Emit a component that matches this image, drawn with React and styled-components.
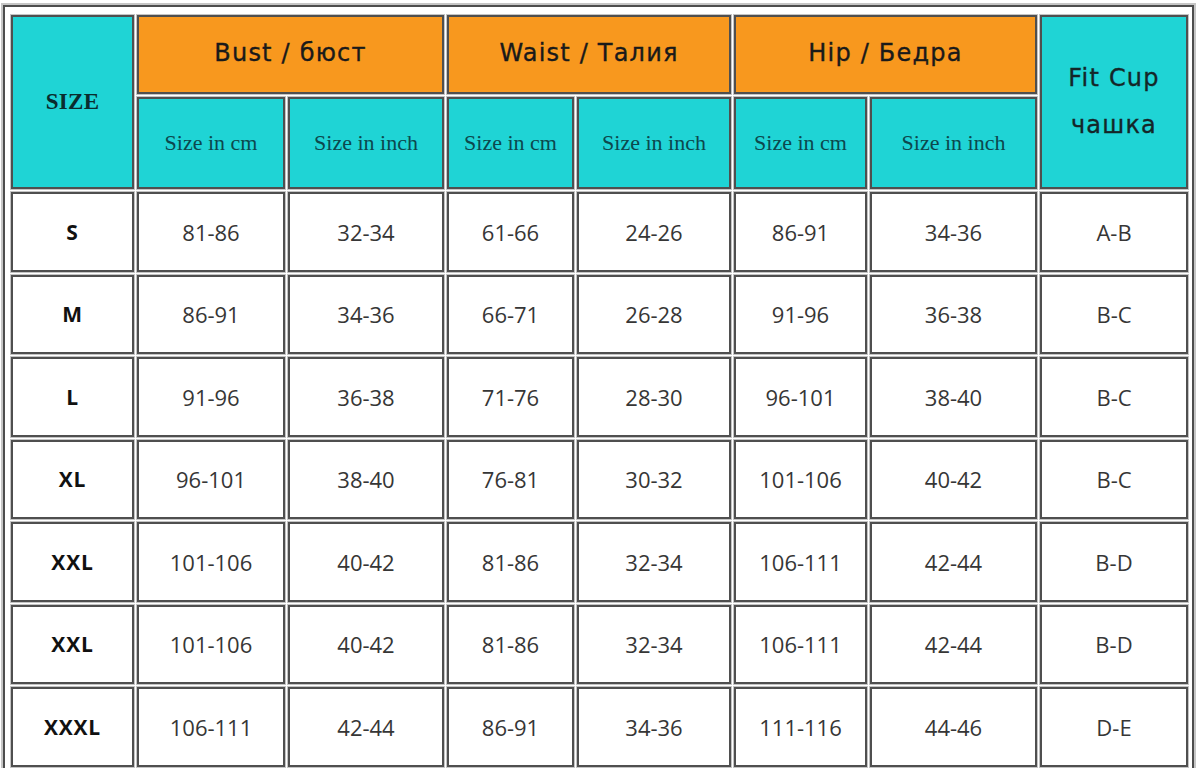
import React from "react";
import styled, { createGlobalStyle } from "styled-components";

const Global = createGlobalStyle`
  html, body { margin: 0; padding: 0; background: #ffffff; }
  body { font-family: "Open Sans", "Liberation Sans", sans-serif; }
`;

const Outer = styled.div`
  display: inline-block;
  margin: 3px 0 0 1px;
  border: 2px solid #c6c6c6;
`;

const Frame = styled.div`
  border: 2px solid #4d4d4d;
  padding: 8px 4px 6px 6px;
  background: #ffffff;
`;

const Grid = styled.div`
  display: grid;
  grid-template-columns: 123px 148px 156px 127px 154px 133px 167px 148px;
  grid-template-rows: 79px 92px repeat(7, 79.5px);
  gap: 3px;
`;

const Cell = styled.div`
  box-sizing: border-box;
  display: flex;
  align-items: center;
  justify-content: center;
  text-align: center;
  padding-bottom: ${(p) => (p.$lift ? `${p.$lift}px` : "0")};
  border: 2px solid #4f4f4f;
  box-shadow: 0 0 0 1px #c4c4c4;
  background: ${(p) => (p.$tone === "orange" ? "#f8981e" : p.$tone === "cyan" ? "#1fd4d5" : "#ffffff")};
  grid-column: ${(p) => (p.$colSpan ? `span ${p.$colSpan}` : "auto")};
  grid-row: ${(p) => (p.$rowSpan ? `span ${p.$rowSpan}` : "auto")};
`;

const SizeHead = styled.span`
  font-family: "Liberation Serif", "Times New Roman", serif;
  font-weight: 700;
  font-size: 23px;
  color: #0a2c2e;
  letter-spacing: 0.3px;
`;

const GroupHead = styled.span`
  font-family: "DejaVu Sans", Verdana, sans-serif;
  font-size: 24px;
  color: #1a1a1a;
  letter-spacing: 1.2px;
  -webkit-text-stroke: 0.35px #1a1a1a;
`;

const CupHead = styled.span`
  font-family: "DejaVu Sans", Verdana, sans-serif;
  font-size: 24px;
  line-height: 47px;
  color: #142628;
  letter-spacing: 1.2px;
  -webkit-text-stroke: 0.35px #142628;
`;

const SubHead = styled.span`
  font-family: "Liberation Serif", "Times New Roman", serif;
  font-size: 22px;
  color: #0c484d;
`;

const SizeLabel = styled.span`
  font-family: "Open Sans", "Liberation Sans", sans-serif;
  font-weight: 700;
  font-size: 21px;
  color: #111111;
  letter-spacing: 0.8px;
`;

const Value = styled.span`
  font-family: "Open Sans", "Liberation Sans", sans-serif;
  font-size: 22px;
  color: #363636;
`;

const rows = [
  ["S", "81-86", "32-34", "61-66", "24-26", "86-91", "34-36", "A-B"],
  ["M", "86-91", "34-36", "66-71", "26-28", "91-96", "36-38", "B-C"],
  ["L", "91-96", "36-38", "71-76", "28-30", "96-101", "38-40", "B-C"],
  ["XL", "96-101", "38-40", "76-81", "30-32", "101-106", "40-42", "B-C"],
  ["XXL", "101-106", "40-42", "81-86", "32-34", "106-111", "42-44", "B-D"],
  ["XXL", "101-106", "40-42", "81-86", "32-34", "106-111", "42-44", "B-D"],
  ["XXXL", "106-111", "42-44", "86-91", "34-36", "111-116", "44-46", "D-E"],
];

const groups = ["Bust / бюст", "Waist / Талия", "Hip / Бедра"];

export default function App() {
  return (
    <>
      <Global />
      <Outer>
        <Frame>
          <Grid>
            <Cell $tone="cyan" $rowSpan={2}>
              <SizeHead>SIZE</SizeHead>
            </Cell>
            {groups.map((g) => (
              <Cell key={g} $tone="orange" $colSpan={2} $lift={4}>
                <GroupHead>{g}</GroupHead>
              </Cell>
            ))}
            <Cell $tone="cyan" $rowSpan={2}>
              <CupHead>
                Fit Cup
                <br />
                чашка
              </CupHead>
            </Cell>
            {groups.map((g) => (
              <React.Fragment key={g + "-sub"}>
                <Cell $tone="cyan">
                  <SubHead>Size in cm</SubHead>
                </Cell>
                <Cell $tone="cyan">
                  <SubHead>Size in inch</SubHead>
                </Cell>
              </React.Fragment>
            ))}
            {rows.map((r, i) => (
              <React.Fragment key={i}>
                <Cell>
                  <SizeLabel>{r[0]}</SizeLabel>
                </Cell>
                {r.slice(1).map((v, j) => (
                  <Cell key={j}>
                    <Value>{v}</Value>
                  </Cell>
                ))}
              </React.Fragment>
            ))}
          </Grid>
        </Frame>
      </Outer>
    </>
  );
}
